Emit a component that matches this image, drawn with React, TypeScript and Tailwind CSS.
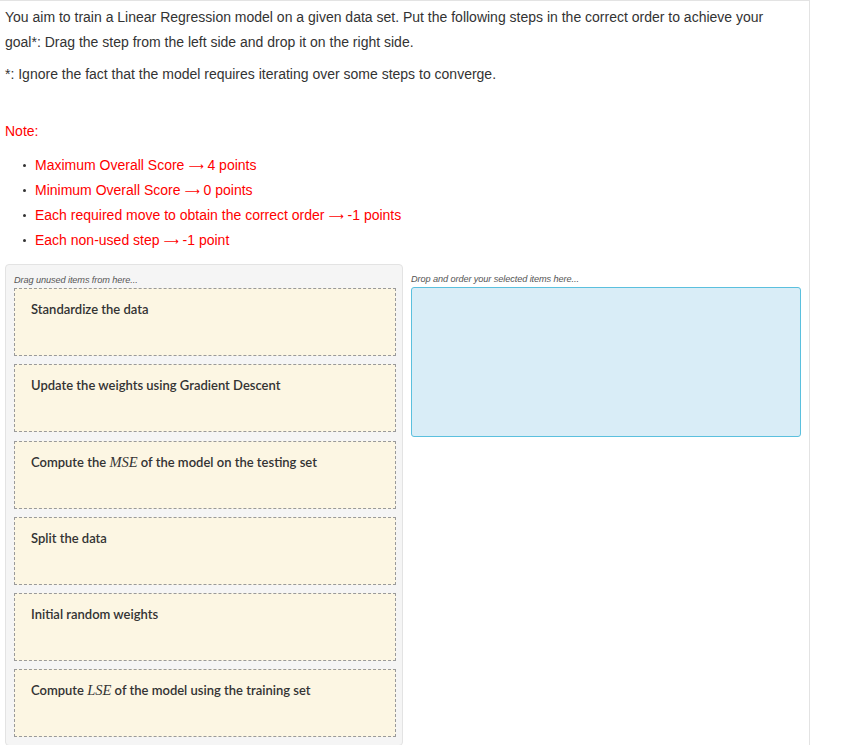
import React from "react";

const Arrow = () => (
  <span className="mx-[4px] inline-block align-baseline font-['DejaVu_Sans',sans-serif] text-[10.5px] leading-[0]">⟶</span>
);

const items: React.ReactNode[] = [
  "Standardize the data",
  "Update the weights using Gradient Descent",
  <>
    Compute the <i className="font-['Liberation_Serif',serif] text-[14.5px] font-normal">MSE</i> of the model on the testing set
  </>,
  "Split the data",
  "Initial random weights",
  <>
    Compute <i className="font-['Liberation_Serif',serif] text-[14.5px] font-normal">LSE</i> of the model using the training set
  </>,
];

const notes: [string, string][] = [
  ["Maximum Overall Score", "4 points"],
  ["Minimum Overall Score", "0 points"],
  ["Each required move to obtain the correct order", "-1 points"],
  ["Each non-used step", "-1 point"],
];

export default function App() {
  return (
    <div className="min-h-[745px] w-[841px] bg-white font-['Liberation_Sans',Arial,sans-serif] text-[14px] text-[#333]">
      <div className="min-h-[745px] w-[810px] border-t border-r border-[#e3e3e3] pl-[5px]">
        <p className="pt-[4px] leading-[25px]">
          You aim to train a Linear Regression model on a given data set. Put the following steps in the correct order to achieve your
          <br />
          goal*: Drag the step from the left side and drop it on the right side.
        </p>
        <p className="mt-[7px] leading-[25px]">*: Ignore the fact that the model requires iterating over some steps to converge.</p>
        <p className="mt-[32px] leading-[25px] text-[#ff0000]">Note:</p>
        <ul className="mt-[9px]">
          {notes.map(([a, b]) => (
            <li key={a} className="flex h-[25px] items-center leading-[25px]">
              <span className="ml-[18px] mr-[9px] h-[3px] w-[3px] rounded-full bg-[#333]" />
              <span className="text-[#ff0000]">
                {a}
                <Arrow />
                {b}
              </span>
            </li>
          ))}
        </ul>
        <div className="mt-[11px] flex items-start">
          <div className="w-[398px] shrink-0 rounded-[4px] border border-[#e3e3e3] bg-[#f5f5f5] pt-[7px] pb-[8px] pl-[8px] pr-[6px]">
            <div className="text-[9.2px] italic leading-[16px] tracking-[-0.1px] text-[#555]">Drag unused items from here...</div>
            <div className="flex flex-col gap-[8.3px]">
              {items.map((it, i) => (
                <div
                  key={i}
                  className="h-[68px] border border-dashed border-[#9a9a9a] bg-[#fcf6e3] pl-[16px] pt-[11px] font-['Lato','Open_Sans',sans-serif] text-[13px] font-semibold leading-[18px] text-[#333]"
                >
                  {it}
                </div>
              ))}
            </div>
          </div>
          <div className="flex-1 pl-[8px] pr-[8px] pt-[8px]">
            <div className="text-[9.2px] italic leading-[15px] tracking-[-0.1px] text-[#555]">Drop and order your selected items here...</div>
            <div className="h-[150px] rounded-[3px] border border-[#5bc0de] bg-[#d9edf7]" />
          </div>
        </div>
      </div>
    </div>
  );
}
